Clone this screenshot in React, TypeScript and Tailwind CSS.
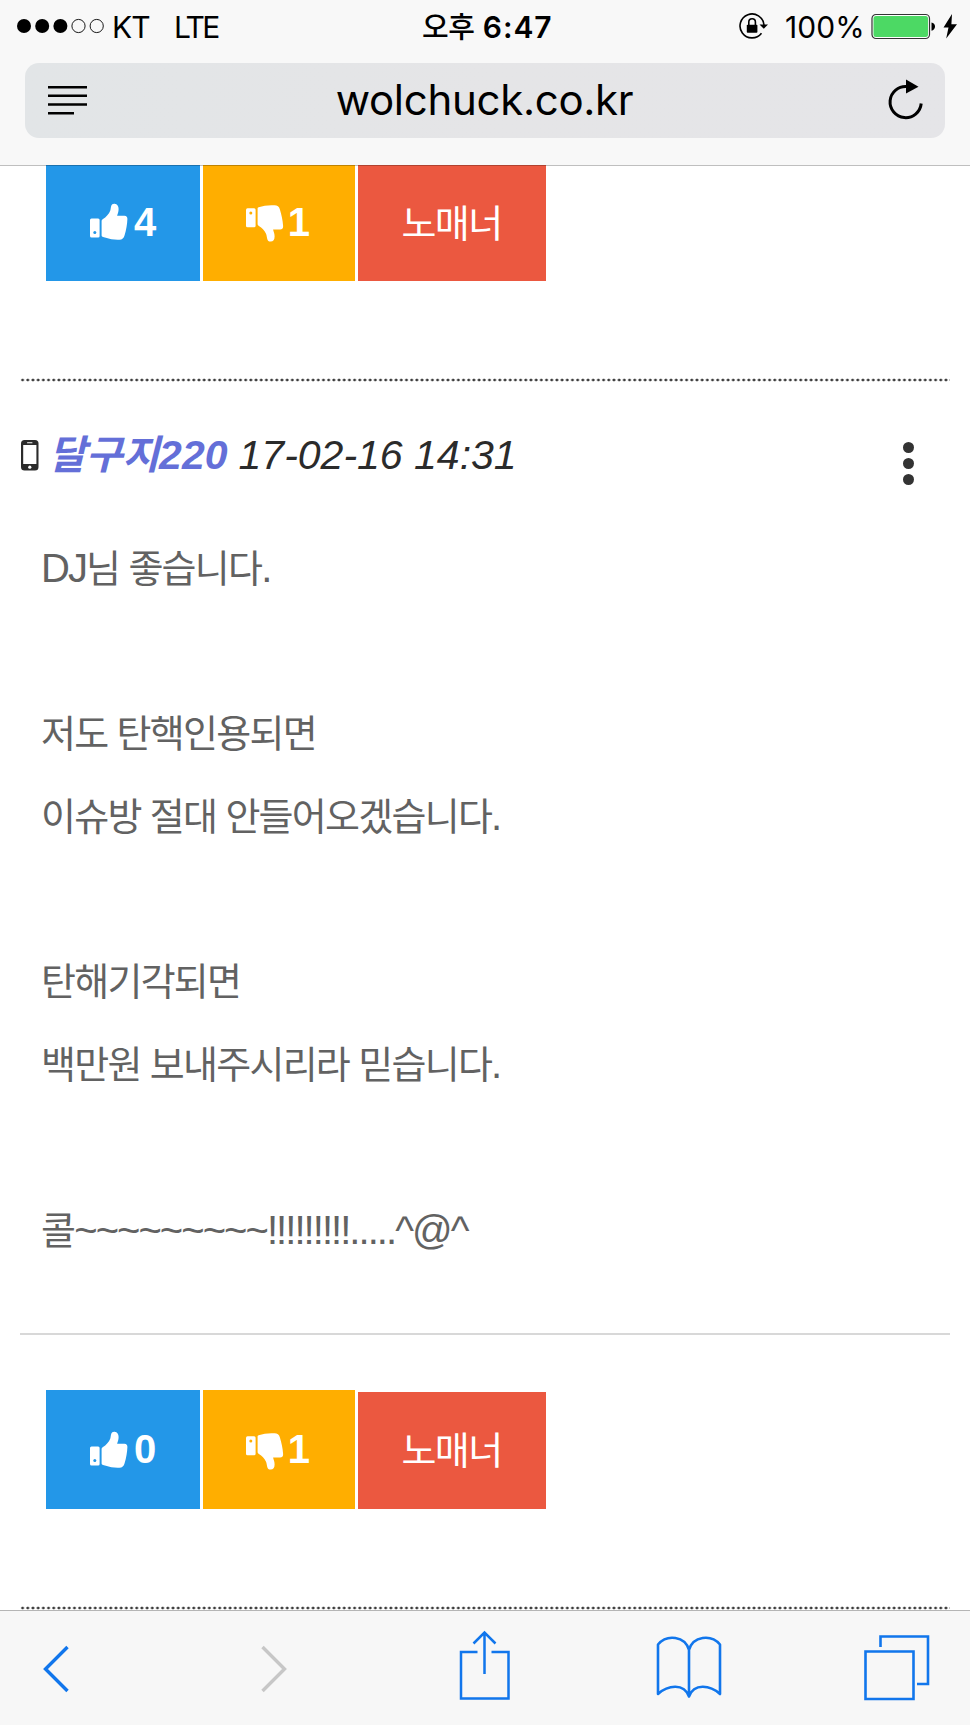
import React from 'react';

const HANGUL = /([\u3131-\uD79D]+)/;

const comment = {
  author: '달구지220',
  date: '17-02-16 14:31',
  lines: [
    'DJ님 좋습니다.',
    '',
    '저도 탄핵인용되면',
    '이슈방 절대 안들어오겠습니다.',
    '',
    '탄해기각되면',
    '백만원 보내주시리라 믿습니다.',
    '',
    '콜~~~~~~~~~!!!!!!!!!.....^@^',
  ],
};

interface MixedTextProps {
  text: string;
  hangulClass: string;
}

// Hangul and latin runs need their own size and tracking
const MixedText: React.FC<MixedTextProps> = ({ text, hangulClass }) => (
  <>
    {text.split(HANGUL).map((part, i) =>
      HANGUL.test(part) ? <span key={i} className={hangulClass}>{part}</span> : part
    )}
  </>
);

const ThumbUp: React.FC<{ hole: string }> = ({ hole }) => (
  <svg width="38" height="37" viewBox="0 0 38 37" fill="white">
    <rect x="0" y="15.5" width="9.6" height="19" rx="1.5" />
    <circle cx="4.8" cy="29.5" r="1.5" fill={hole} />
    <path d="M11.6 18.2c0-1 .5-1.7 1.4-2.2 3-1.8 6.2-5.3 7.3-8.6.5-1.7.5-3 .9-4.4C21.7 1.2 23 .5 24.6.7c2.8.4 4 2.5 4 5.3 0 2.8-.9 4.9-1.5 6.7h7.4c2 0 3 1.3 2.9 3.2-.2 5.1-1.2 11-2.8 16.3-.8 2.9-2.4 4.4-5.2 4.5-5 .2-9.7-.5-13.5-1.9-1.3-.5-2.7-.8-3.4-1-.6-.2-.9-.6-.9-1.3z" />
  </svg>
);

const ThumbDown: React.FC<{ hole: string }> = ({ hole }) => (
  <svg width="38" height="37" viewBox="0 0 38 37" fill="white">
    <rect x="0" y="3.3" width="9.6" height="19" rx="1.5" />
    <circle cx="4.8" cy="8" r="1.5" fill={hole} />
    <path d="M11.6 3.7c0-.9.4-1.2 1-1.4C17.5.9 22.5-.2 28.5.3c2.8.2 4.7 1.3 5.4 4.2 1.6 5.4 2.8 10.3 3.2 16.2.2 2.5-.9 3.7-3 3.8l-7 .1c.3 1.9 1.5 4.1 1.5 6.8 0 3.2-1.4 5.2-3.9 5.2-2 0-3.1-1-3.5-2.9-.5-2.3-.5-3.7-1.3-5.3-1.5-3-3.9-5.4-7-7.4-.9-.6-1.3-1.3-1.3-2.2z" />
  </svg>
);

interface VoteRowProps {
  likes: number;
  dislikes: number;
  clipped?: boolean;
}

const VoteRow: React.FC<VoteRowProps> = ({ likes, dislikes, clipped }) => {
  const box = 'flex items-center justify-center text-white';
  const numClass = 'text-[40px] leading-none font-bold';

  return (
    <div className={`ml-[46px] flex items-end gap-[2.5px] ${clipped ? 'h-[116px]' : 'h-[119px]'}`}>
      <button className={`${box} h-[119px] w-[154px] gap-1.5 bg-[#2397e8]`}>
        <ThumbUp hole="#2397e8" />
        <span className={numClass}>{likes}</span>
      </button>
      <button className={`${box} h-[119px] w-[152.5px] gap-1 bg-[#ffae00] pr-[2px]`}>
        <span className="pt-1"><ThumbDown hole="#ffae00" /></span>
        <span className={numClass}>{dislikes}</span>
      </button>
      <button className={`${box} h-[117px] w-[188px] bg-[#eb5840] pt-[3px] text-[38px] tracking-[-1.6px]`}>
        노매너
      </button>
    </div>
  );
};

const DottedRule = () => (
  <div className="mx-[20px] h-1 bg-[radial-gradient(circle,#3c3c3c_1.1px,transparent_1.7px)] bg-[length:5.2px_4px]" />
);

const StatusBar = () => (
  <div className="flex h-[63px] pl-[17px] pt-[8px] font-[Inter,'Noto_Sans_CJK_KR',sans-serif] text-[30px] leading-[38px] text-black">
    <div className="flex w-[405px]">
      <svg className="mt-[10px]" width="88" height="16" viewBox="0 0 88 16">
        <circle cx="7" cy="8" r="7" />
        <circle cx="25.2" cy="8" r="7" />
        <circle cx="43.4" cy="8" r="7" />
        <circle cx="61.5" cy="8" r="6.6" fill="none" stroke="black" strokeWidth="0.9" />
        <circle cx="79.7" cy="8" r="6.6" fill="none" stroke="black" strokeWidth="0.9" />
      </svg>
      <span className="ml-[7px] w-[62px] tracking-[-0.8px]">KT</span>
      <span className="tracking-[-2.6px]">LTE</span>
    </div>
    <div className="w-[316px] whitespace-nowrap font-semibold tracking-[0.9px]">
      <span className="text-[29px] font-medium tracking-[-0.5px]">오후</span> 6:47
    </div>
    <svg className="mt-[4px]" width="32" height="28" viewBox="0 0 32 28">
      <path d="M23.5 21.3A12 12 0 1 1 26 13" fill="none" stroke="black" strokeWidth="1.6" />
      <path d="M21.5 12.5h8.5l-4.2 4.3z" />
      <rect x="8.8" y="12.8" width="10.6" height="8" rx="0.8" />
      <path d="M10.8 13V10a3.3 3.3 0 0 1 6.6 0v3" fill="none" stroke="black" strokeWidth="1.6" />
    </svg>
    <span className="ml-[15px] w-[86px] tracking-[0.1px]">100%</span>
    <svg className="mt-[5px]" width="88" height="28" viewBox="0 0 88 28">
      <rect x="1" y="1.5" width="57.5" height="24" rx="4" fill="white" stroke="#333" strokeWidth="1.2" />
      <rect x="2.5" y="3" width="54.5" height="21" rx="2.5" fill="#4cd964" />
      <path d="M60.5 9.5c2 .3 3.5 1.8 3.5 4.1s-1.5 3.8-3.5 4.1z" />
      <path d="M81 1l-8.5 13.5h5L75.2 25.5 86 11.2h-5.6z" />
    </svg>
  </div>
);

const AddressBar = () => (
  <div className="mx-[25px] flex h-[75px] items-center justify-between rounded-[14px] bg-linear-to-r from-[#e2e5e7] via-[#e5e5e7] to-[#e5e5e8] pl-[23px] pr-[21px]">
    <svg className="mb-[2px]" width="40" height="30" viewBox="0 0 40 30" fill="none" stroke="black" strokeWidth="2.5">
      <path d="M0 2.2h39M0 10.8h39M0 19.5h39M0 28.2h26" />
    </svg>
    <span className="mr-[7px] pb-[1px] font-[Inter,sans-serif] text-[42px] leading-none tracking-[-0.3px] text-black">wolchuck.co.kr</span>
    <svg className="mb-[1px]" width="36" height="42" viewBox="0 0 36 42">
      <path d="M33.2 24.5A15.6 15.6 0 1 1 19 7.5" fill="none" stroke="black" strokeWidth="3" />
      <path d="M18 .5l12.5 7.2L18 14.5z" />
    </svg>
  </div>
);

const Toolbar = () => (
  <div className="flex h-[115px] shrink-0 border-t border-[#b5b5b5] bg-[#f7f7f7] text-[#1176ec]">
    <svg className="ml-[43px] mt-[34px]" width="26" height="48" viewBox="0 0 26 48" fill="none" stroke="currentColor" strokeWidth="3.4">
      <path d="M24.5 2L2.5 24l22 22" />
    </svg>
    <svg className="ml-[192px] mt-[34px]" width="26" height="48" viewBox="0 0 26 48" fill="none" stroke="#c7c7c7" strokeWidth="3.4">
      <path d="M1.5 2l22 22-22 22" />
    </svg>
    <svg className="ml-[171px] mt-[18px]" width="54" height="72" viewBox="0 0 54 72" fill="none" stroke="currentColor" strokeWidth="2.5">
      <path d="M19.5 23H3v46.6h47.5V23H33.5M26.5 45V4M15.5 14.5l11-11 11 11" />
    </svg>
    <svg className="ml-[144px] mt-[24px]" width="66" height="64" viewBox="0 0 66 64" fill="none" stroke="currentColor" strokeWidth="2.6" strokeLinejoin="round">
      <path d="M33 15C29 1 11 -1 2 9.5V59c10-9 26-11 31 2.500C38 48 54 50 64 59V9.500C55 -1 37 1 33 15zM33 15v46" />
    </svg>
    <svg className="ml-[142px] mt-[22px]" width="66" height="68" viewBox="0 0 66 68" fill="none" stroke="currentColor" strokeWidth="2.6">
      <path d="M1.500 18.500h48v47.500h-48zM16.500 14V3.500H64v47.500H53" />
    </svg>
  </div>
);

export default function App() {
  return (
    <div className="flex h-[1725px] w-[970px] flex-col overflow-hidden bg-white font-['Liberation_Sans','Noto_Sans_CJK_KR',sans-serif]">
      <header className="relative z-10 h-[165px] shrink-0 bg-[#f8f8f8] shadow-[0_1px_0_rgba(0,0,0,0.25)]">
        <StatusBar />
        <AddressBar />
      </header>

      <main className="flex flex-1 flex-col">
        <VoteRow likes={4} dislikes={1} clipped />
        <div className="mt-[97px]"><DottedRule /></div>

        {/* Comment header */}
        <div className="mt-[43px] flex h-[80px] items-start justify-between pl-[21px] pr-[56px]">
          <div className="flex items-center text-[41px] leading-[60px] italic text-[#2b2b2b]">
            <svg className="mr-[10px]" width="18" height="31" viewBox="0 0 18 31">
              <rect x="0" y="0" width="17.5" height="30.5" rx="3.5" fill="#2b2b2b" />
              <rect x="2.2" y="5" width="13.2" height="19" fill="white" />
              <rect x="6" y="2.2" width="5.5" height="1" rx="0.5" fill="white" />
              <circle cx="8.8" cy="27.2" r="1.6" fill="white" />
            </svg>
            <strong className="mr-[11px] whitespace-nowrap text-[#646fd8]">
              <MixedText text={comment.author} hangulClass="text-[40px] leading-none tracking-[-0.1px]" />
            </strong>
            <span className="whitespace-nowrap">{comment.date}</span>
          </div>
          <button className="mt-[17px] flex flex-col gap-[5px]">
            <i className="size-[11px] rounded-full bg-[#333]" />
            <i className="size-[11px] rounded-full bg-[#333]" />
            <i className="size-[11px] rounded-full bg-[#333]" />
          </button>
        </div>

        {/* Comment body */}
        <div className="mt-[22px] pl-[41px] text-[40px] leading-[82.7px] tracking-[-1.95px] text-[#626262]">
          {comment.lines.map((line, i) => (
            <p key={i} className="h-[82.7px] whitespace-pre">
              <MixedText text={line} hangulClass="text-[38px] leading-none tracking-[-1.75px]" />
            </p>
          ))}
        </div>

        <div className="mx-[20px] mt-[61.7px] h-[2px] bg-[#d8d8d8]" />
        <div className="mt-[55px]"><VoteRow likes={0} dislikes={1} /></div>
        <div className="mt-[97px]"><DottedRule /></div>
      </main>

      <Toolbar />
    </div>
  );
}
